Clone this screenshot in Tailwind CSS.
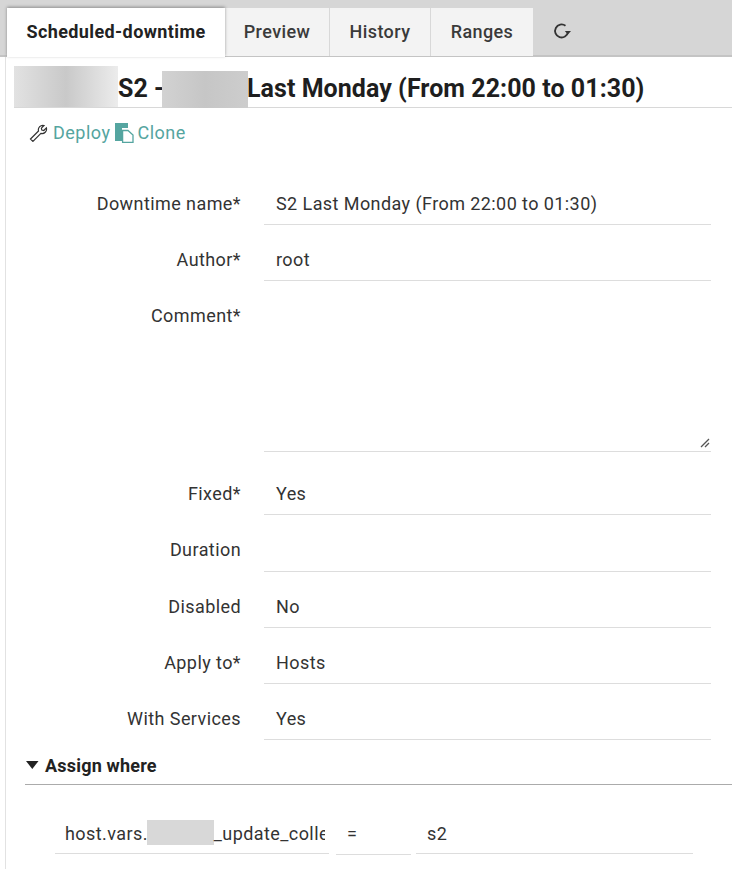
<!DOCTYPE html>
<html lang="en">
<head>
<meta charset="UTF-8">
<title>Scheduled-downtime</title>
<script src="https://cdn.jsdelivr.net/npm/@tailwindcss/browser@4"></script>
</head>
<body class="bg-white text-[#222] font-['Roboto',sans-serif] w-[732px] h-[869px] overflow-hidden">
<!-- Tabs -->
<div class="h-[57px] bg-[#d6d6d6] pt-2 pl-[7px] flex border-b-2 border-[#c4c4c4] text-[18px] tracking-[0.4px]">
  <div class="w-[218px] h-[49px] pb-[3px] bg-white flex items-center justify-center font-bold shadow-[0_-1px_3px_rgba(0,0,0,0.35)] relative">Scheduled-downtime</div>
  <div class="w-[105px] h-[48px] pb-[2px] bg-[#f3f3f3] flex items-center justify-center font-medium text-[#3a3a3a] border-r border-[#d8d8d8]">Preview</div>
  <div class="w-[101px] h-[48px] pb-[2px] bg-[#f3f3f3] flex items-center justify-center font-medium text-[#3a3a3a] border-r border-[#d8d8d8]">History</div>
  <div class="w-[102px] h-[48px] pb-[2px] bg-[#f3f3f3] flex items-center justify-center font-medium text-[#3a3a3a]">Ranges</div>
  <div class="w-[57px] h-[48px] pb-[2px] flex items-center justify-center">
    <svg width="18" height="18" viewBox="0 0 18 18" fill="none" stroke="#333" stroke-width="1.8"><path d="M15 10A6.500 6.500 0 1 1 12.500 3.800"/><path d="M11.800 9h6.200l-3.100 3.600z" fill="#333" stroke="none"/></svg>
  </div>
</div>
<!-- Content -->
<div class="ml-[5px] border-l border-[#e2e2e2] h-[812px]">
  <div class="ml-[8px] h-[51px] border-b border-[#d8d8d8] flex items-end relative">
    <div class="w-[104px] h-[41px] bg-gradient-to-r from-[#e2e2e2] via-[#c9c9c9] to-[#ececec] self-start mt-[9px]"></div>
    <h1 class="text-[25px] font-bold leading-[30px] pb-[3px] tracking-[0.05px] text-[#1e1e1e] flex whitespace-nowrap">S2 -<span class="w-[83px] h-[30px] relative inline-block"><span class="absolute left-[-2px] top-[-3px] w-[86px] h-[37px] bg-gradient-to-r from-[#d2d2d2] via-[#c6c6c6] to-[#cdcdcd]"></span></span>Last Monday (From 22:00 to 01:30)</h1>
  </div>
  <div class="pl-[23px] pt-[1px] h-[49px] flex items-center gap-[3px] text-[18px] tracking-[0.5px] text-[#55a5a0] leading-[24px]">
    <svg width="20" height="18" viewBox="0 0 20 18" fill="none" stroke="#333" stroke-width="1.2"><path d="M1.500 15l8-8a4.500 4.500 0 0 1 5.500-5.500l-2.600 2.600.4 2 2 .4 2.600-2.600a4.500 4.500 0 0 1-5.500 5.500l-8 8z"/></svg>
    <span class="ml-[1px]">Deploy</span>
    <svg width="20" height="20" viewBox="0 0 20 20" class="mr-[1px]"><path d="M1 0h13v5H8v13H1z" fill="#55a5a0"/><path d="M8.600 7.500h5.400l5 4.500v7.400H8.600z" fill="#fff" stroke="#55a5a0" stroke-width="1.300"/></svg>
    <span>Clone</span>
  </div>
  <!-- Form -->
  <div class="pt-[19px] text-[18px] tracking-[0.42px] text-[#333]">
    <div class="flex h-[49px]">
      <label class="w-[235px] text-right pt-[14px]">Downtime name*</label>
      <div class="ml-[23px] w-[447px] h-[49px] border-b border-[#ddd] pl-3 pt-[14px]">S2 Last Monday (From 22:00 to 01:30)</div>
    </div>
    <div class="flex h-[56px]">
      <label class="w-[235px] text-right pt-[21px]">Author*</label>
      <div class="ml-[23px] w-[447px] h-[56px] border-b border-[#ddd] pl-3 pt-[21px]">root</div>
    </div>
    <div class="flex h-[171px]">
      <label class="w-[235px] text-right pt-[21px]">Comment*</label>
      <div class="ml-[23px] w-[447px] h-[171px] border-b border-[#ddd] relative">
        <svg width="10" height="10" viewBox="0 0 10 10" class="absolute right-[1px] bottom-[3px]" stroke="#555" stroke-width="1.300"><path d="M1 9l8-8M5 9l4-4"/></svg>
      </div>
    </div>
    <div class="flex h-[63px]">
      <label class="w-[235px] text-right pt-[28px]">Fixed*</label>
      <div class="ml-[23px] w-[447px] h-[63px] border-b border-[#ddd] pl-3 pt-[28px]">Yes</div>
    </div>
    <div class="flex h-[57px]">
      <label class="w-[235px] text-right pt-[21px]">Duration</label>
      <div class="ml-[23px] w-[447px] h-[57px] border-b border-[#ddd]"></div>
    </div>
    <div class="flex h-[56px]">
      <label class="w-[235px] text-right pt-[21px]">Disabled</label>
      <div class="ml-[23px] w-[447px] h-[56px] border-b border-[#ddd] pl-3 pt-[21px]">No</div>
    </div>
    <div class="flex h-[56px]">
      <label class="w-[235px] text-right pt-[21px]">Apply to*</label>
      <div class="ml-[23px] w-[447px] h-[56px] border-b border-[#ddd] pl-3 pt-[21px]">Hosts</div>
    </div>
    <div class="flex h-[56px]">
      <label class="w-[235px] text-right pt-[21px]">With Services</label>
      <div class="ml-[23px] w-[447px] h-[56px] border-b border-[#ddd] pl-3 pt-[21px]">Yes</div>
    </div>
  </div>
  <!-- Assign where -->
  <div class="ml-[19px] mt-[15px] h-[30px] border-b border-[#ababab] flex items-start gap-[7px] font-bold text-[18px] tracking-[0.2px] text-[#222]">
    <svg width="13" height="8" viewBox="0 0 13 8" class="ml-[1px] mt-[6px]"><path d="M0 0h12.500L6.300 8z" fill="#222"/></svg>
    <span class="leading-[24px] -mt-[1px] -ml-[1px]">Assign where</span>
  </div>
  <div class="flex pl-[49px] pt-[24px] text-[18px] tracking-[0.42px] text-[#333]">
    <div class="w-[274px] h-[45px] border-b border-[#ddd] pl-[10px] pt-[11px] overflow-hidden whitespace-nowrap flex">
      <div class="w-[260px] overflow-hidden flex"><span>host.vars.</span><span class="w-[67px] h-[26px] shrink-0 bg-[#d8d8d8] -mt-[1px] -ml-[1px]"></span><span>_update_collector</span></div>
    </div>
    <div class="ml-[7px] w-[75px] h-[46px] border-b border-[#ddd] pl-[11px] pt-[11px]">=</div>
    <div class="ml-[5px] w-[277px] h-[45px] border-b border-[#ddd] pl-[11px] pt-[11px]">s2</div>
  </div>
</div>
</body>
</html>
